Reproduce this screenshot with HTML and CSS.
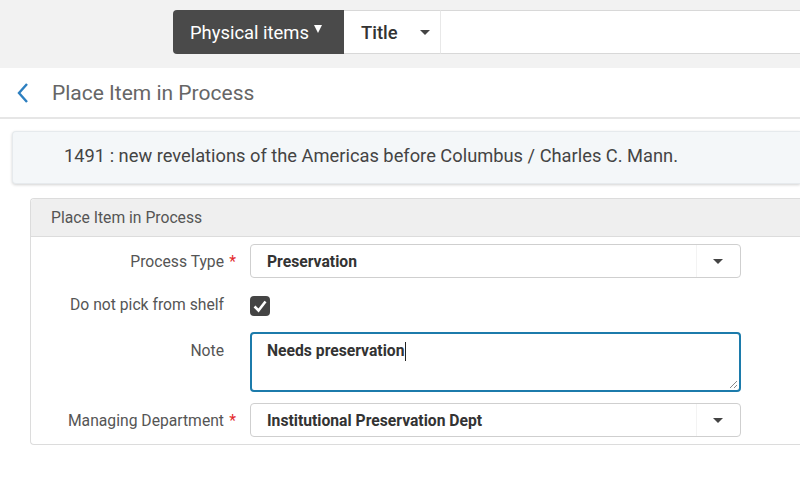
FILE: index.html
```html
<!DOCTYPE html>
<html>
<head>
<meta charset="utf-8">
<link rel="stylesheet" href="styles.css">
</head>
<body>
<div class="topbar">
  <div class="search">
    <div class="scope">Physical items <span class="tri-w"></span></div>
    <div class="field">Title <span class="tri-d"></span></div>
    <div class="query"></div>
  </div>
</div>
<div class="pagehead">
  <svg class="back" width="14" height="22" viewBox="0 0 14 22"><path d="M11 2 L3 11 L11 20" fill="none" stroke="#2d7fc0" stroke-width="2.4" stroke-linejoin="miter"/></svg>
  <h1 class="title">Place Item in Process</h1>
</div>
<div class="record">1491 : new revelations of the Americas before Columbus / Charles C. Mann.</div>
<div class="panel">
  <div class="panel-head">Place Item in Process</div>
  <div class="panel-body">
    <div class="row r1">
      <div class="label"><span>Process Type</span><span class="star">*</span></div>
      <div class="select"><span class="val">Preservation</span><span class="sep"></span><span class="tri-d"></span></div>
    </div>
    <div class="row r2">
      <div class="label lab-chk"><span>Do not pick from shelf</span><span class="star"></span></div>
      <div class="chk"><svg width="20" height="20" viewBox="0 0 20 20"><path d="M4.5 10.5 L8.5 14.5 L15.5 5.5" fill="none" stroke="#fff" stroke-width="2.6"/></svg></div>
    </div>
    <div class="row r3">
      <div class="label lab-note"><span>Note</span><span class="star"></span></div>
      <div class="note"><span class="val">Needs preservation</span><span class="cursor"></span>
        <svg class="grip" width="10" height="10" viewBox="0 0 10 10"><path d="M9 2 L2 9 M9 6 L6 9" stroke="#888" stroke-width="1"/></svg>
      </div>
    </div>
    <div class="row r4">
      <div class="label"><span>Managing Department</span><span class="star">*</span></div>
      <div class="select"><span class="val">Institutional Preservation Dept</span><span class="sep"></span><span class="tri-d"></span></div>
    </div>
  </div>
</div>
</body>
</html>
```
FILE: styles.css
```css
* { box-sizing: border-box; }
html, body { margin: 0; padding: 0; }
body {
  width: 800px;
  height: 494px;
  overflow: hidden;
  background: #fff;
  font-family: Roboto, "Liberation Sans", Arial, sans-serif;
  color: #333;
}
.topbar {
  height: 68px;
  background: #f2f2f2;
  padding: 10px 0 0 173px;
}
.search {
  display: flex;
  height: 44px;
}
.scope {
  width: 171px;
  background: #4a4a4a;
  color: #fff;
  border-radius: 4px 0 0 4px;
  font-size: 18.4px;
  display: flex;
  align-items: center;
  padding-left: 17px;
}
.tri-w {
  display: inline-block;
  width: 0; height: 0;
  border-left: 4.5px solid transparent;
  border-right: 4.5px solid transparent;
  border-top: 8px solid #fff;
  margin-left: 5px;
  margin-top: -6px;
}
.field {
  width: 97px;
  background: #fff;
  border-top: 1px solid #d8d8d8;
  border-bottom: 1px solid #d8d8d8;
  border-right: 1px solid #e8e8e8;
  display: flex;
  align-items: center;
  padding-left: 17px;
  font-size: 18.4px;
  font-weight: 500;
  color: #333;
}
.field .tri-d { margin-left: 22px; }
.tri-d {
  display: inline-block;
  width: 0; height: 0;
  border-left: 5px solid transparent;
  border-right: 5px solid transparent;
  border-top: 5px solid #444;
}
.query {
  flex: 1;
  background: #fff;
  border-top: 1px solid #d8d8d8;
  border-bottom: 1px solid #d8d8d8;
}
.pagehead {
  height: 51px;
  border-bottom: 2px solid #e6e6e6;
  display: flex;
  align-items: center;
  padding-left: 16px;
}
.title {
  margin: 0 0 0 22px;
  font-size: 21px;
  font-weight: 400;
  color: #666;
}
.record {
  margin: 12px 0 0 12px;
  height: 53px;
  background: #f4f7f9;
  border: 1px solid #e6eaed;
  border-right: none;
  border-radius: 4px 0 0 4px;
  box-shadow: 0 1px 3px rgba(0,0,0,0.18);
  display: flex;
  align-items: center;
  padding: 0 0 5px 51px;
  font-size: 18.3px;
  color: #444;
}
.panel {
  margin: 14px 0 0 30px;
  border: 1px solid #dcdcdc;
  border-right: none;
  border-radius: 4px 0 0 4px;
}
.panel-head {
  height: 38px;
  background: #efefef;
  border-bottom: 1px solid #dcdcdc;
  display: flex;
  align-items: center;
  padding-left: 20px;
  font-size: 15.7px;
  color: #555;
  border-radius: 4px 0 0 0;
}
.panel-body {
  padding: 7px 0 7px 0;
  display: flex;
  flex-direction: column;
}
.row {
  display: grid;
  grid-template-columns: 207px 491px;
  column-gap: 12px;
}
.r2 { margin-top: 11px; height: 36px; }
.r3 { margin-top: 7px; }
.r4 { margin-top: 11px; }
.label {
  display: flex;
  justify-content: flex-end;
  font-size: 15.7px;
  color: #555;
  line-height: 32px;
  padding-top: 2px;
}
.lab-chk { line-height: 28px; }
.lab-note { line-height: 36px; padding-top: 1px; }
.star {
  width: 14px;
  color: #e3282b;
  text-align: right;
  padding-right: 2px;
}
.select {
  height: 34px;
  border: 1px solid #cfcfcf;
  border-radius: 4px;
  display: flex;
  align-items: center;
  padding-left: 16px;
  background: #fff;
}
.val {
  font-size: 15.7px;
  font-weight: 700;
  color: #333;
}
.select .val { flex: 1; }
.sep {
  width: 1px;
  align-self: stretch;
  background: #f3f3f3;
}
.select .tri-d { margin: 0 17px 0 16px; }
.chk {
  width: 20px;
  height: 20px;
  margin-top: 7px;
  background: #444;
  border-radius: 4px;
}
.chk svg { display: block; }
.note {
  position: relative;
  height: 60px;
  border: 2px solid #1c7bab;
  border-radius: 4px;
  padding: 5px 0 0 15px;
  line-height: 24px;
  display: flex;
  align-items: flex-start;
}
.cursor {
  display: inline-block;
  width: 1px;
  height: 19px;
  background: #222;
  margin: 3px 0 0 1px;
}
.grip {
  position: absolute;
  right: 1px;
  bottom: 1px;
}
```
